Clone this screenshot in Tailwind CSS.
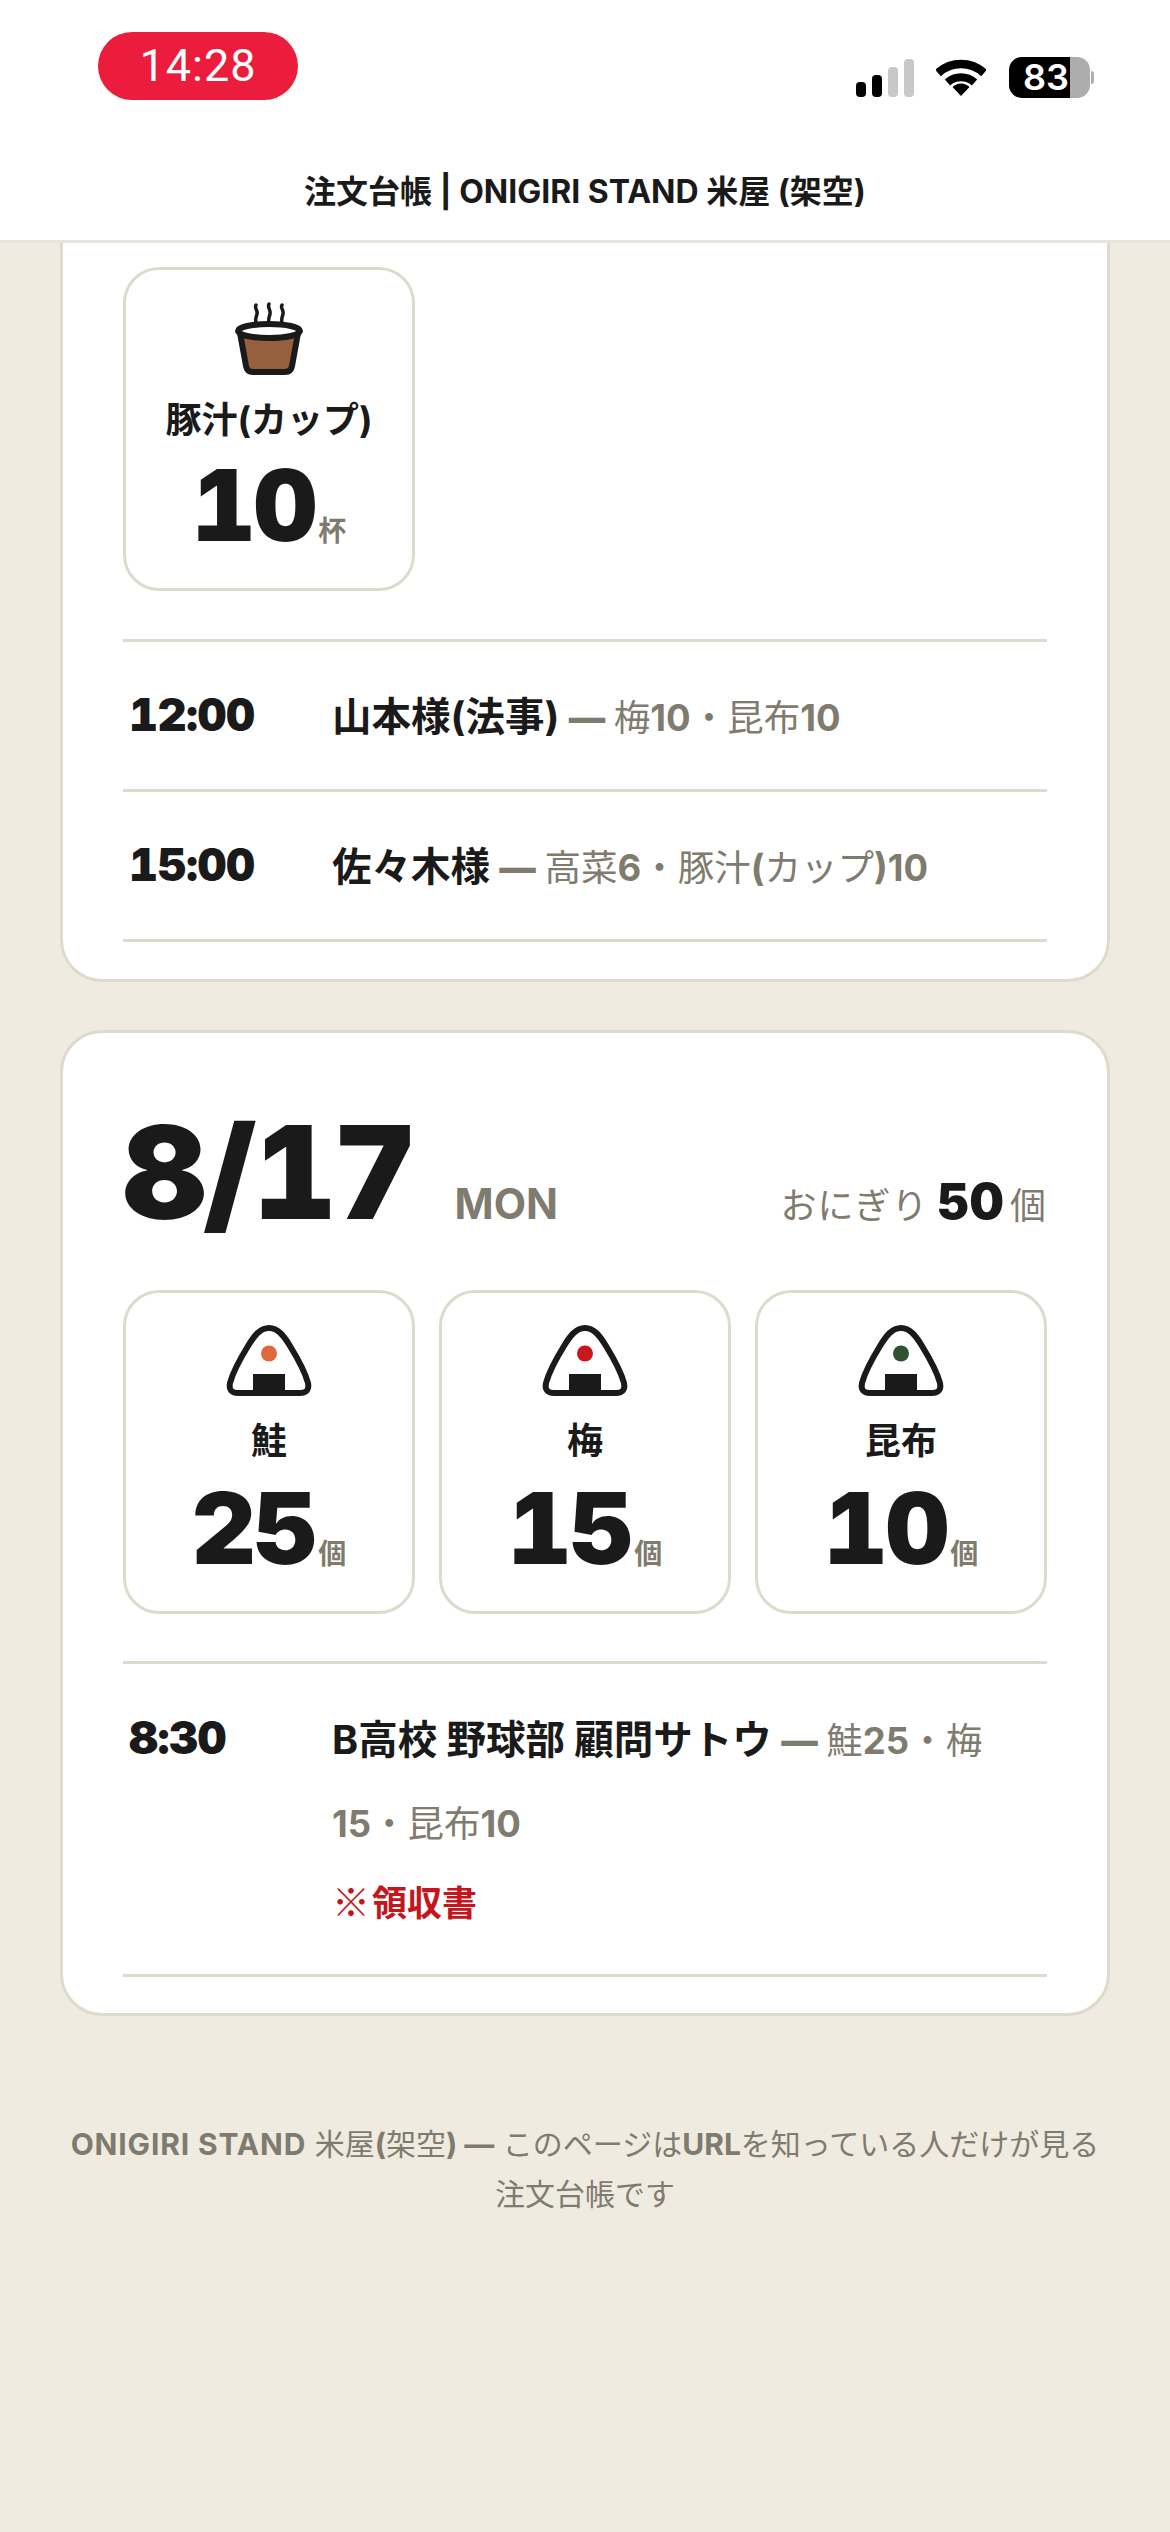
<!doctype html>
<html lang="ja">
<head>
<meta charset="utf-8">
<script src="https://cdn.jsdelivr.net/npm/@tailwindcss/browser@4"></script>
</head>
<body class="m-0 bg-[#efebe0] font-['Inter','Noto_Sans_CJK_JP',sans-serif] text-[#1a1a1a]">
<div class="w-[1170px] h-[2532px] overflow-hidden flex flex-col">
  <header class="bg-white h-[243px] border-b-[3px] border-[#e6e4dc] shrink-0 flex flex-col">
    <div class="flex justify-between items-start pl-[98px] pr-[76px] pt-[32px] h-[140px]">
      <div class="w-[200px] h-[68px] rounded-[34px] bg-[#eb1c3c] text-white text-[45px] leading-[68px] text-center font-normal tracking-[1px] font-['Roboto',sans-serif]">14:28</div>
      <div class="flex items-start mt-[25px]">
        <svg class="mt-[2px]" width="60" height="39" viewBox="0 0 60 39"><rect x="1" y="23" width="10" height="15" rx="4" fill="#000"/><rect x="17" y="16" width="10" height="22" rx="4" fill="#000"/><rect x="33" y="8" width="10" height="30" rx="4" fill="#c8c8c8"/><rect x="49" y="0" width="10" height="38" rx="4" fill="#c8c8c8"/></svg>
        <svg class="mt-[2px] ml-[21px]" width="50" height="38" viewBox="0 0 50 38"><path d="M2 14A34 34 0 0 1 48 14" fill="none" stroke="#000" stroke-width="8.5"/><path d="M11.5 23.5A20 20 0 0 1 38.5 23.5" fill="none" stroke="#000" stroke-width="8"/><path d="M25 37L16.5 28A12 12 0 0 1 33.5 28Z" fill="#000"/></svg>
        <div class="flex items-center ml-[23px]">
          <div class="w-[61px] h-[41px] rounded-l-[13px] bg-black text-white text-[36px] leading-[41px] font-semibold text-right pr-[1px]">83</div>
          <div class="w-[20px] h-[41px] rounded-r-[13px] bg-[#adadad]"></div>
          <div class="w-[3px] h-[13px] rounded-r-[3px] bg-[#adadad] ml-[1px]"></div>
        </div>
      </div>
    </div>
    <div class="text-center text-[32px] leading-[50px] font-bold mt-[27px]">注文台帳 | ONIGIRI STAND 米屋 (架空)</div>
  </header>

  <main class="px-[60px] flex flex-col">
    <section class="bg-white border-[3px] border-t-0 border-[#dedbcd] rounded-b-[42px] px-[60px] pt-[24px] pb-[37px]">
      <div class="grid grid-cols-3 gap-[24px]">
        <div class="h-[324px] border-[3px] border-[#dedbcd] rounded-[36px] flex flex-col items-center pt-[30px]">
          <svg width="70" height="78" viewBox="0 0 70 78"><path d="M22 5c-2 3 2 5 1 9s-2 5-1 9M35 4c-2 3 2 6 1 10s-2 5-1 9M48 5c-2 3 2 5 1 9s-2 5-1 9" fill="none" stroke="#1a1a1a" stroke-width="3.5" stroke-linecap="round"/><path d="M6 33L12 66Q13 72 19 72H51Q57 72 58 66L64 33Z" fill="#96603f" stroke="#1a1a1a" stroke-width="6" stroke-linejoin="round"/><ellipse cx="35" cy="31" rx="31" ry="7" fill="#fff" stroke="#1a1a1a" stroke-width="6"/></svg>
          <div class="text-[36px] leading-[54px] font-bold mt-[15px]">豚汁(カップ)</div>
          <div class="flex items-baseline mt-[8px] h-[100px] leading-[100px]"><span class="text-[99px] font-black tabular-nums tracking-[-2px]">10</span><span class="text-[28px] font-semibold text-[#7f7b6e] ml-[3px]">杯</span></div>
        </div>
      </div>
      <div class="mt-[48px] border-t-[3px] border-[#dedbcd]">
        <div class="flex border-b-[3px] border-[#dedbcd] pt-[35px] pb-[30px] leading-[81px]">
          <div class="w-[209px] shrink-0 pl-[6px] mt-[-3px] text-[45px] font-black tabular-nums tracking-[-0.5px]">12:00</div>
          <div class="flex-1 text-[39.5px] font-bold">山本様(法事) <span class="text-[#7f7b6e] font-bold text-[36.5px]"><span class="font-black">—</span> <span class="font-normal">梅</span>10<span class="font-normal">・昆布</span>10</span></div>
        </div>
        <div class="flex border-b-[3px] border-[#dedbcd] pt-[35px] pb-[30px] leading-[81px]">
          <div class="w-[209px] shrink-0 pl-[6px] mt-[-3px] text-[45px] font-black tabular-nums tracking-[-0.5px]">15:00</div>
          <div class="flex-1 text-[39.5px] font-bold">佐々木様 <span class="text-[#7f7b6e] font-bold text-[36.5px]"><span class="font-black">—</span> <span class="font-normal">高菜</span>6<span class="font-normal">・豚汁</span>(<span class="font-normal">カップ</span>)10</span></div>
        </div>
      </div>
    </section>

    <section class="mt-[48px] bg-white border-[3px] border-[#dedbcd] rounded-[42px] px-[60px] pt-[64px] pb-[36px]">
      <div class="flex items-baseline h-[158px] leading-[150px]">
        <div class="text-[129px] font-black tabular-nums tracking-[-3px]">8/17</div>
        <div class="ml-[41px] text-[42px] font-bold text-[#7f7b6e]">MON</div>
        <div class="ml-auto text-[36px] tracking-[1px] text-[#7f7b6e]">おにぎり<span class="ml-[8px] text-[49px] font-black tracking-normal text-[#1a1a1a]">50</span><span class="ml-[6px]">個</span></div>
      </div>
      <div class="grid grid-cols-3 gap-[24px] mt-[35px]">
        <div class="h-[324px] border-[3px] border-[#dedbcd] rounded-[36px] flex flex-col items-center pt-[30px]">
          <svg width="90" height="75" viewBox="0 0 90 75"><path d="M45 5C54 5 60 13 66 23C74 36 81 49 84 60Q86 70 76 70H14Q4 70 6 60C9 49 16 36 24 23C30 13 36 5 45 5Z" fill="#fff" stroke="#1a1a1a" stroke-width="6"/><rect x="29" y="51" width="32" height="21" fill="#1a1a1a"/><circle cx="45" cy="30.5" r="8" fill="#e0683f"/></svg>
          <div class="text-[36px] leading-[54px] font-bold mt-[16px]">鮭</div>
          <div class="flex items-baseline mt-[10px] h-[100px] leading-[100px]"><span class="text-[99px] font-black tabular-nums tracking-[-2px]">25</span><span class="text-[28px] font-semibold text-[#7f7b6e] ml-[3px]">個</span></div>
        </div>
        <div class="h-[324px] border-[3px] border-[#dedbcd] rounded-[36px] flex flex-col items-center pt-[30px]">
          <svg width="90" height="75" viewBox="0 0 90 75"><path d="M45 5C54 5 60 13 66 23C74 36 81 49 84 60Q86 70 76 70H14Q4 70 6 60C9 49 16 36 24 23C30 13 36 5 45 5Z" fill="#fff" stroke="#1a1a1a" stroke-width="6"/><rect x="29" y="51" width="32" height="21" fill="#1a1a1a"/><circle cx="45" cy="30.5" r="8" fill="#c8171f"/></svg>
          <div class="text-[36px] leading-[54px] font-bold mt-[16px]">梅</div>
          <div class="flex items-baseline mt-[10px] h-[100px] leading-[100px]"><span class="text-[99px] font-black tabular-nums tracking-[-2px]">15</span><span class="text-[28px] font-semibold text-[#7f7b6e] ml-[3px]">個</span></div>
        </div>
        <div class="h-[324px] border-[3px] border-[#dedbcd] rounded-[36px] flex flex-col items-center pt-[30px]">
          <svg width="90" height="75" viewBox="0 0 90 75"><path d="M45 5C54 5 60 13 66 23C74 36 81 49 84 60Q86 70 76 70H14Q4 70 6 60C9 49 16 36 24 23C30 13 36 5 45 5Z" fill="#fff" stroke="#1a1a1a" stroke-width="6"/><rect x="29" y="51" width="32" height="21" fill="#1a1a1a"/><circle cx="45" cy="30.5" r="8" fill="#2f5230"/></svg>
          <div class="text-[36px] leading-[54px] font-bold mt-[16px]">昆布</div>
          <div class="flex items-baseline mt-[10px] h-[100px] leading-[100px]"><span class="text-[99px] font-black tabular-nums tracking-[-2px]">10</span><span class="text-[28px] font-semibold text-[#7f7b6e] ml-[3px]">個</span></div>
        </div>
      </div>
      <div class="mt-[47px] border-t-[3px] border-[#dedbcd]">
        <div class="flex border-b-[3px] border-[#dedbcd] pt-[36px] pb-[34px] leading-[82px]">
          <div class="w-[209px] shrink-0 pl-[6px] mt-[-3px] text-[45px] font-black tabular-nums tracking-[-0.5px]">8:30</div>
          <div class="flex-1 text-[39.5px] font-bold"><div class="mt-[-1px]">B高校 野球部 顧問サトウ <span class="text-[#7f7b6e] font-bold text-[36.5px]"><span class="font-black">—</span> <span class="font-normal">鮭</span>25<span class="font-normal">・梅</span>15<span class="font-normal">・昆布</span>10</span></div><div class="mt-[-4px] text-[35px] leading-[78px] text-[#c4161c] font-['Noto_Sans_CJK_JP',sans-serif]"><span class="text-[38px] mr-[2px] font-black">※</span>領収書</div></div>
        </div>
      </div>
    </section>

    <footer class="mt-[103px] text-center text-[30px] leading-[50px] text-[#7f7b6e] px-[6px]"><span class="font-bold tracking-[0.85px]">ONIGIRI STAND</span> 米屋<span class="font-bold">(</span>架空<span class="font-bold">) —</span> このページは<span class="font-bold">URL</span>を知っている人だけが見る注文台帳です</footer>
  </main>
</div>
</body>
</html>
